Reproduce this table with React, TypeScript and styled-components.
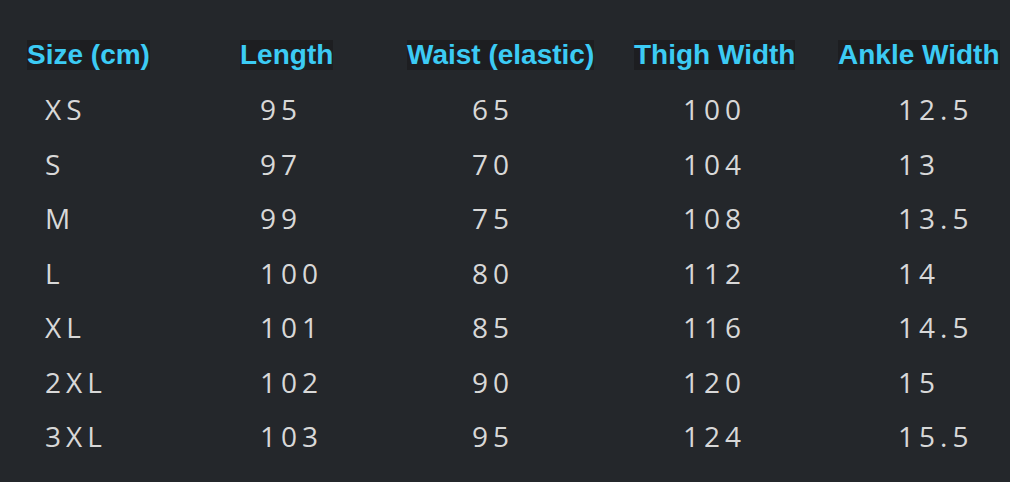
import React from "react";
import styled, { createGlobalStyle } from "styled-components";

const Global = createGlobalStyle`
  html, body { margin: 0; padding: 0; background: #24272b; }
  body { width: 1010px; height: 482px; overflow: hidden; }
`;

const Page = styled.div`
  width: 1010px;
  height: 482px;
  box-sizing: border-box;
  background: #24272b;
  padding-top: 40px;
`;

const Table = styled.div`
  display: grid;
  grid-template-columns: 220px 170px 225px 205px 190px;
  grid-template-rows: 42px repeat(7, 54.5px);
`;

const HeaderRow = styled.div`
  display: contents;
`;

const HeadCell = styled.div<{ $pl: number }>`
  padding-left: ${(p) => p.$pl}px;
  height: 30px;
  display: flex;
  align-items: flex-start;
`;

const HeadText = styled.span`
  display: inline-block;
  height: 30px;
  line-height: 30px;
  background: #1d1e21;
  color: #3ccbf4;
  font-family: "Liberation Sans", Arial, sans-serif;
  font-weight: 700;
  font-size: 28px;
  white-space: nowrap;
`;

const Cell = styled.div<{ $pl: number }>`
  padding-left: ${(p) => p.$pl}px;
  font-family: "Open Sans", "DejaVu Sans", sans-serif;
  font-size: 28px;
  letter-spacing: 5px;
  color: #d8d8d8;
  display: flex;
  align-items: center;
  white-space: nowrap;
`;

const headers: [string, number][] = [
  ["Size (cm)", 27],
  ["Length", 20],
  ["Waist (elastic)", 17],
  ["Thigh Width", 19],
  ["Ankle Width", 18],
];

const pads = [45, 40, 82, 68, 78];

const rows = [
  ["XS", "95", "65", "100", "12.5"],
  ["S", "97", "70", "104", "13"],
  ["M", "99", "75", "108", "13.5"],
  ["L", "100", "80", "112", "14"],
  ["XL", "101", "85", "116", "14.5"],
  ["2XL", "102", "90", "120", "15"],
  ["3XL", "103", "95", "124", "15.5"],
];

export default function App() {
  return (
    <>
      <Global />
      <Page>
        <Table>
          <HeaderRow>
            {headers.map(([h, pl]) => (
              <HeadCell key={h} $pl={pl}>
                <HeadText>{h}</HeadText>
              </HeadCell>
            ))}
          </HeaderRow>
          {rows.map((r) =>
            r.map((v, i) => (
              <Cell key={r[0] + i} $pl={pads[i]}>
                {v}
              </Cell>
            ))
          )}
        </Table>
      </Page>
    </>
  );
}
